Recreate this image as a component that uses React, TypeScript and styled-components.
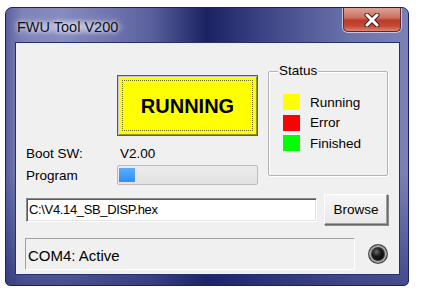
import React from "react";
import styled, { createGlobalStyle } from "styled-components";

const GlobalStyle = createGlobalStyle`
  html, body {
    margin: 0;
    padding: 0;
    background: #ffffff;
  }
  body {
    font-family: "Liberation Sans", Arial, sans-serif;
    color: #000;
  }
`;

const legend = [
  { color: "#ffff00", label: "Running" },
  { color: "#ff0000", label: "Error" },
  { color: "#00ff00", label: "Finished" },
];

const App = () => (
  <>
    <GlobalStyle />
    <Window>
      <TitleBar>
        <Title>FWU Tool V200</Title>
        <CloseButton aria-label="Close">
          <svg width="16" height="14" viewBox="0 0 16 14">
            <path d="M3 2 L13 12 M13 2 L3 12" stroke="#4a1d1d" strokeWidth="5" strokeLinecap="round" />
            <path d="M3 2 L13 12 M13 2 L3 12" stroke="#ffffff" strokeWidth="3" strokeLinecap="round" />
          </svg>
        </CloseButton>
      </TitleBar>
      <Client>
        <TopRow>
          <LeftColumn>
            <RunButton>RUNNING</RunButton>
            <InfoRow $gap={9}>
              <InfoLabel>Boot SW:</InfoLabel>
              <InfoValue>V2.00</InfoValue>
            </InfoRow>
            <InfoRow $gap={4}>
              <InfoLabel>Program</InfoLabel>
              <Progress>
                <ProgressChunk style={{ width: 16 }} />
              </Progress>
            </InfoRow>
          </LeftColumn>
          <GroupBox>
            <GroupTitle>Status</GroupTitle>
            <LegendList>
              {legend.map((item) => (
                <LegendItem key={item.label}>
                  <Swatch $color={item.color} />
                  <span>{item.label}</span>
                </LegendItem>
              ))}
            </LegendList>
          </GroupBox>
        </TopRow>
        <FileRow>
          <PathBox>C:\V4.14_SB_DISP.hex</PathBox>
          <BrowseButton>Browse</BrowseButton>
        </FileRow>
        <StatusRow>
          <StatusPanel>COM4: Active</StatusPanel>
          <Led />
        </StatusRow>
      </Client>
    </Window>
  </>
);

const Window = styled.div`
  margin: 7px 0 0 5px;
  width: 404px;
  height: 279px;
  box-sizing: border-box;
  border: 1px solid #1a2162;
  border-radius: 7px 7px 5px 5px;
  padding: 0 8px 10px 9px;
  display: flex;
  flex-direction: column;
  background:
    linear-gradient(to bottom, rgba(40, 48, 120, 0) 60%, rgba(30, 38, 110, 0.6) 100%),
    linear-gradient(to right, #5a619e 0%, #7d83b8 4%, #868cbe 14%, #5a619e 36%, #1a2262 50%, #3c4486 64%, #6c73ab 86%, #7b81b6 100%);
  overflow: hidden;
`;

const TitleBar = styled.div`
  height: 34px;
  flex: none;
  display: flex;
  align-items: flex-start;
  justify-content: space-between;
`;

const Title = styled.div`
  margin: 10px 0 0 2px;
  font-size: 14.5px;
  color: #111;
  text-shadow: 0 0 8px rgba(230, 232, 250, 0.9), 0 0 4px rgba(230, 232, 250, 0.9);
  background: radial-gradient(ellipse at center, rgba(215, 218, 240, 0.75) 0%, rgba(215, 218, 240, 0) 70%);
  padding: 0 10px 0 0;
  line-height: 18px;
`;

const CloseButton = styled.div`
  width: 58px;
  height: 24px;
  margin-right: -1px;
  box-sizing: border-box;
  border: 1px solid #5a2a3a;
  border-top: none;
  border-radius: 0 0 5px 5px;
  box-shadow: 0 0 0 1px #c4c8e4;
  background: linear-gradient(to bottom, #dca295 0%, #cf7565 40%, #b83a2a 55%, #c84c38 80%, #dd8670 100%);
  display: flex;
  align-items: center;
  justify-content: center;
`;

const Client = styled.div`
  flex: 1;
  background: #f0f0f0;
  border: 1px solid #25306e;
  padding: 28px 11px 0 9px;
  display: flex;
  flex-direction: column;
`;

const TopRow = styled.div`
  display: flex;
  align-items: flex-start;
  gap: 10px;
`;

const LeftColumn = styled.div`
  width: 233px;
  display: flex;
  flex-direction: column;
`;

const RunButton = styled.div`
  margin: 4px 0 0 92px;
  width: 141px;
  height: 61px;
  box-sizing: border-box;
  background: #ffff00;
  border: 1px solid #5a5a5a;
  box-shadow: inset 1px 1px 0 #c8c8c8, inset -1px -1px 0 #9a9a00;
  display: flex;
  align-items: center;
  justify-content: center;
  font-size: 20px;
  font-weight: bold;
  position: relative;
  padding-top: 2px;

  &::after {
    content: "";
    position: absolute;
    inset: 4px;
    border: 1px dotted #6a6a30;
  }
`;

const InfoRow = styled.div<{ $gap: number }>`
  display: flex;
  align-items: center;
  margin-top: ${(p) => p.$gap}px;
  font-size: 13.5px;
  min-height: 16px;
`;

const InfoLabel = styled.div`
  width: 92px;
  padding-left: 1px;
  box-sizing: border-box;
  flex: none;
`;

const InfoValue = styled.div`
  padding-left: 3px;
`;

const Progress = styled.div`
  width: 141px;
  height: 20px;
  box-sizing: border-box;
  border: 1px solid #bcbcbc;
  border-radius: 2px;
  background: linear-gradient(to bottom, #ececec, #e2e2e2);
  padding: 2px 1px;
  display: flex;
`;

const ProgressChunk = styled.div`
  height: 100%;
  background: linear-gradient(to bottom, #5aaefc, #2f90f5);
`;

const GroupBox = styled.div`
  width: 120px;
  height: 105px;
  box-sizing: border-box;
  border: 1px solid #b4b4b4;
  box-shadow: inset 1px 1px 0 #ffffff, 1px 1px 0 #ffffff;
  border-radius: 2px;
  position: relative;
  padding: 22px 0 0 14px;
`;

const GroupTitle = styled.span`
  position: absolute;
  top: -9px;
  left: 9px;
  padding: 0 1px;
  background: #f0f0f0;
  font-size: 13.5px;
  line-height: 16px;
`;

const LegendList = styled.div`
  display: flex;
  flex-direction: column;
  gap: 4px;
`;

const LegendItem = styled.div`
  display: flex;
  align-items: center;
  gap: 10px;
  font-size: 13.5px;
  height: 16.5px;
`;

const Swatch = styled.span<{ $color: string }>`
  width: 17px;
  height: 16px;
  background: ${(p) => p.$color};
  flex: none;
`;

const FileRow = styled.div`
  display: flex;
  align-items: center;
  gap: 7px;
  margin-top: 9px;
`;

const PathBox = styled.div`
  margin-left: 1px;
  width: 291px;
  height: 24px;
  box-sizing: border-box;
  background: #ffffff;
  border: 1px solid;
  border-color: #8a8a8a #ffffff #ffffff #8a8a8a;
  box-shadow: inset 1px 1px 0 #5a5a5a, inset -1px -1px 0 #e3e3e3;
  font-size: 13px;
  letter-spacing: -0.35px;
  padding: 0 0 0 2px;
  display: flex;
  align-items: center;
`;

const BrowseButton = styled.div`
  width: 64px;
  height: 31px;
  box-sizing: border-box;
  background: linear-gradient(to bottom, #f6f6f6, #e8e8e8);
  border: 1px solid;
  border-color: #ffffff #6a6a6a #6a6a6a #ffffff;
  box-shadow: inset -1px -1px 0 #a0a0a0, 1px 1px 0 #8a8a8a;
  font-size: 13.5px;
  display: flex;
  align-items: center;
  justify-content: center;
`;

const StatusRow = styled.div`
  display: flex;
  align-items: center;
  gap: 13px;
  margin-top: 13px;
`;

const StatusPanel = styled.div`
  width: 334px;
  height: 32px;
  box-sizing: border-box;
  border: 1px solid;
  border-color: #a0a0a0 #ffffff #ffffff #a0a0a0;
  font-size: 15px;
  padding: 2px 0 0 2px;
  display: flex;
  align-items: center;
`;

const Led = styled.div`
  width: 20px;
  height: 20px;
  box-sizing: border-box;
  border-radius: 50%;
  border: 1px solid #4a4a4a;
  box-shadow: inset 0 0 0 2px #a8a8a8, inset 0 0 0 3px #3a3a3a;
  background: radial-gradient(circle at 42% 38%, #6a6a6a 0%, #1a1a1a 30%, #000 70%);
`;

export default App;
